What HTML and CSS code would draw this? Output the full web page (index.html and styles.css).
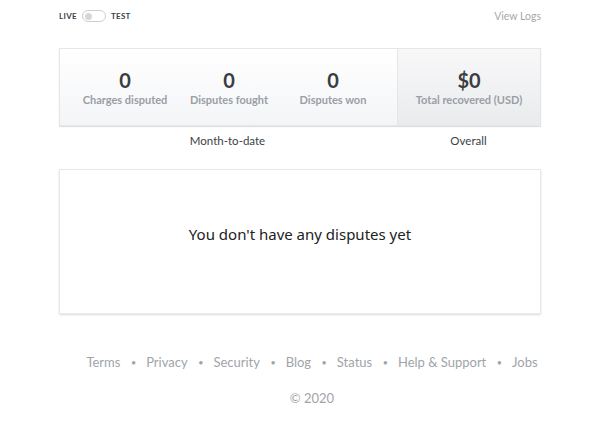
FILE: index.html
```html
<!DOCTYPE html>
<html>
<head>
<meta charset="utf-8">
<link rel="stylesheet" href="styles.css">
</head>
<body>
<div class="page">
  <div class="topbar">
    <div class="mode">
      <span class="mode-label">LIVE</span>
      <span class="toggle"><span class="knob"></span></span>
      <span class="mode-label">TEST</span>
    </div>
    <a class="logs">View Logs</a>
  </div>

  <div class="stats">
    <div class="stats-main">
      <div class="stat"><div class="num">0</div><div class="lbl">Charges disputed</div></div>
      <div class="stat"><div class="num">0</div><div class="lbl">Disputes fought</div></div>
      <div class="stat"><div class="num">0</div><div class="lbl">Disputes won</div></div>
    </div>
    <div class="stats-side">
      <div class="stat"><div class="num">$0</div><div class="lbl">Total recovered (USD)</div></div>
    </div>
  </div>
  <div class="periods">
    <div class="period-main">Month-to-date</div>
    <div class="period-side">Overall</div>
  </div>

  <div class="empty"><span>You don't have any disputes yet</span></div>
</div>

<div class="footer">
  <div class="links">
    <a>Terms</a><span class="dot">•</span><a>Privacy</a><span class="dot">•</span><a>Security</a><span class="dot">•</span><a>Blog</a><span class="dot">•</span><a>Status</a><span class="dot">•</span><a>Help &amp; Support</a><span class="dot">•</span><a>Jobs</a>
  </div>
  <div class="copy">© 2020</div>
</div>
</body>
</html>
```
FILE: styles.css
```css
html, body {
  margin: 0;
  padding: 0;
  background: #fff;
}
body {
  font-family: Lato, "Liberation Sans", sans-serif;
  color: #333;
}
.page {
  width: 482px;
  margin: 0 auto;
}
.topbar {
  display: flex;
  justify-content: space-between;
  align-items: center;
  height: 12px;
  padding-top: 10px;
}
.mode {
  display: flex;
  align-items: center;
}
.mode-label {
  font-size: 8px;
  font-weight: 700;
  color: #3c3f44;
  letter-spacing: 0.3px;
}
.toggle {
  width: 20px;
  height: 10px;
  border: 1.5px solid #cbced3;
  border-radius: 7px;
  margin: 0 5px 0 5px;
  display: flex;
  align-items: center;
  padding-left: 2px;
  box-sizing: content-box;
  background: #fff;
}
.knob {
  width: 7px;
  height: 7px;
  border-radius: 50%;
  background: #d5d7da;
}
.logs {
  font-size: 10.5px;
  color: #a4a8ad;
}
.stats {
  margin-top: 26px;
  display: flex;
  height: 78px;
  border: 1px solid #e4e6ea;
  box-sizing: border-box;
  box-shadow: 0 1px 1px rgba(0,0,0,0.12);
}
.stats-main {
  flex: 0 0 337px;
  display: flex;
  padding: 0 12px 0 13px;
  box-sizing: border-box;
  background: linear-gradient(#ffffff, #f4f5f7);
}
.stats-main .stat {
  flex: 1;
}
.stats-side {
  flex: 1;
  display: flex;
  border-left: 1px solid #e4e6ea;
  background: linear-gradient(#f8f8f9, #eaebed);
}
.stats-side .stat {
  flex: 1;
}
.stat {
  text-align: center;
  padding-top: 19px;
}
.num {
  font-size: 20px;
  line-height: 24px;
  font-weight: 700;
  color: #3a3d42;
}
.lbl {
  font-size: 11px;
  line-height: 14px;
  font-weight: 700;
  color: #9a9ea5;
  margin-top: 1px;
}
.periods {
  display: flex;
  font-size: 11.5px;
  color: #3c3f44;
  height: 16px;
  line-height: 16px;
  margin-top: 7px;
}
.period-main {
  flex: 0 0 337px;
  text-align: center;
}
.period-side {
  flex: 1;
  text-align: center;
}
.empty {
  margin-top: 20px;
  height: 145px;
  border: 1px solid #e8e9eb;
  box-sizing: border-box;
  box-shadow: 0 1px 2px rgba(0,0,0,0.14);
  display: flex;
  align-items: center;
  justify-content: center;
  font-family: "Noto Sans", sans-serif;
  font-size: 15px;
  color: #222;
  padding-bottom: 16px;
}
.footer {
  margin-top: 39px;
  padding-left: 24px;
  text-align: center;
  font-size: 13px;
  color: #a0a4a9;
}
.links {
  height: 18px;
  line-height: 18px;
  white-space: nowrap;
}
.links a {
  color: #a0a4a9;
}
.dot {
  margin: 0 10px 0 10.5px;
  font-size: 9px;
  vertical-align: 1px;
}
.copy {
  margin-top: 18px;
  line-height: 18px;
}
```
